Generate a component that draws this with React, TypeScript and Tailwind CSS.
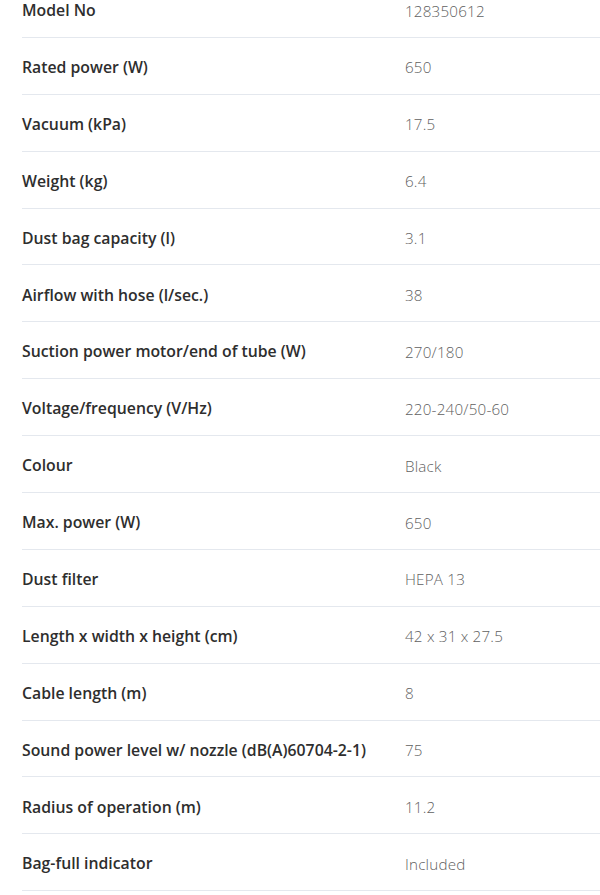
import React from "react";

const rows: [string, string][] = [
  ["Model No", "128350612"],
  ["Rated power (W)", "650"],
  ["Vacuum (kPa)", "17.5"],
  ["Weight (kg)", "6.4"],
  ["Dust bag capacity (l)", "3.1"],
  ["Airflow with hose (l/sec.)", "38"],
  ["Suction power motor/end of tube (W)", "270/180"],
  ["Voltage/frequency (V/Hz)", "220-240/50-60"],
  ["Colour", "Black"],
  ["Max. power (W)", "650"],
  ["Dust filter", "HEPA 13"],
  ["Length x width x height (cm)", "42 x 31 x 27.5"],
  ["Cable length (m)", "8"],
  ["Sound power level w/ nozzle (dB(A)60704-2-1)", "75"],
  ["Radius of operation (m)", "11.2"],
  ["Bag-full indicator", "Included"],
];

export default function App() {
  return (
    <div className="w-[600px] h-[895px] overflow-hidden bg-white" style={{ fontFamily: '"Open Sans", "Noto Sans", sans-serif' }}>
      <div className="-mt-[19px] pl-[22px]">
        {rows.map(([k, v]) => (
          <div key={k} className="flex items-center h-[56.9px] pt-[4px] border-b border-[#e4e8ee]">
            <div className="w-[383px] shrink-0 text-[15.8px] font-semibold text-[#2e2e2e]">{k}</div>
            <div className="text-[15.2px] font-light text-[#5f5f5f] tracking-[0.2px]">{v}</div>
          </div>
        ))}
      </div>
    </div>
  );
}
